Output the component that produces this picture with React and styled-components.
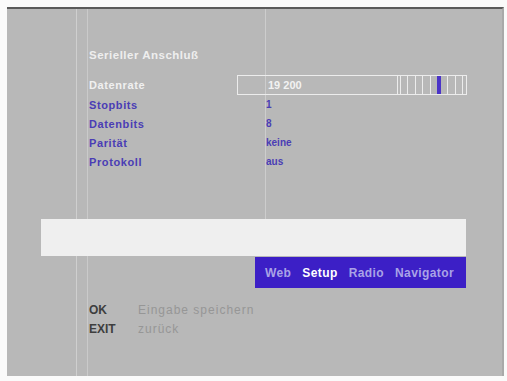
import React from 'react'
import styled, { createGlobalStyle } from 'styled-components'

const GlobalStyle = createGlobalStyle`
  body {
    margin: 0;
    background: #fafafa;
    font-family: "Liberation Sans", Arial, sans-serif;
  }
`

const settings = [
  { label: 'Stopbits', value: '1' },
  { label: 'Datenbits', value: '8' },
  { label: 'Parität', value: 'keine' },
  { label: 'Protokoll', value: 'aus' },
]

const ticks = [0, 1, 2, 3, 4, 5, 6, 7, 8]
const activeTick = 5

const navItems = [
  { label: 'Web' },
  { label: 'Setup', active: true },
  { label: 'Radio' },
  { label: 'Navigator' },
]

const keys = [
  { key: 'OK', text: 'Eingabe speichern' },
  { key: 'EXIT', text: 'zurück' },
]

const App = () => (
  <>
    <GlobalStyle />
    <Screen>
      <Content>
        <Title>Serieller Anschluß</Title>
        <Form>
          <Label $light>Datenrate</Label>
          <RateBox>
            <RateValue>19 200</RateValue>
            <Ticks>
              {ticks.map(i => <Tick key={i} $active={i === activeTick} />)}
            </Ticks>
          </RateBox>
          {settings.map(row => (
            <React.Fragment key={row.label}>
              <Label>{row.label}</Label>
              <Value>{row.value}</Value>
            </React.Fragment>
          ))}
        </Form>
      </Content>
      <InfoBar />
      <NavBar>
        {navItems.map(item => (
          <NavItem key={item.label} $active={item.active}>{item.label}</NavItem>
        ))}
      </NavBar>
      <Keys>
        {keys.map(k => (
          <React.Fragment key={k.key}>
            <KeyName>{k.key}</KeyName>
            <KeyText>{k.text}</KeyText>
          </React.Fragment>
        ))}
      </Keys>
    </Screen>
  </>
)

const Screen = styled.div`
  margin: 7px 3px 0 7px;
  width: 497px;
  height: 369px;
  box-sizing: border-box;
  border-top: 2px solid #5a5a5a;
  border-right: 2px solid #a9a9a9;
  background-color: #b8b8b8;
  background-image:
    linear-gradient(#cfcfcf, #cfcfcf),
    linear-gradient(#cacaca, #cacaca),
    linear-gradient(#cdcdcd, #cdcdcd);
  background-size: 1px 100%, 1px 100%, 1px 210px;
  background-position: 69px 0, 80px 0, 258px 0;
  background-repeat: no-repeat;
  padding-top: 39px;
  display: flex;
  flex-direction: column;
`

const Content = styled.div`
  padding-left: 82px;
`

const Title = styled.div`
  height: 14px;
  line-height: 14px;
  font-size: 11.5px;
  font-weight: bold;
  color: #eeeeee;
  letter-spacing: 0.5px;
  margin-bottom: 13px;
`

const Form = styled.div`
  display: grid;
  grid-template-columns: 148px 230px;
  grid-auto-rows: 19px;
  grid-template-rows: 20px;
  align-items: center;
`

const Label = styled.div`
  font-size: 11px;
  font-weight: bold;
  letter-spacing: 0.6px;
  color: ${({ $light }) => ($light ? '#f0f0f0' : '#4a3db5')};
`

const Value = styled.div`
  padding-left: 29px;
  font-size: 10px;
  font-weight: bold;
  color: #4a3db5;
`

const RateBox = styled.div`
  height: 20px;
  box-sizing: border-box;
  border: 1px solid #ececec;
  display: flex;
  align-items: stretch;
`

const RateValue = styled.div`
  flex: 1;
  padding-left: 30px;
  display: flex;
  align-items: center;
  font-size: 11px;
  font-weight: bold;
  color: #f2f2f2;
  border-right: 1px solid #ececec;
`

const Ticks = styled.div`
  width: 68px;
  display: flex;
  justify-content: space-between;
  padding: 0 3px 0 2px;
  box-sizing: border-box;
`

const Tick = styled.span`
  width: ${({ $active }) => ($active ? '4px' : '1px')};
  background: ${({ $active }) => ($active ? '#4a33c8' : '#ececec')};
`

const InfoBar = styled.div`
  margin: 48px 0 0 34px;
  width: 425px;
  height: 37px;
  background: #efefef;
`

const NavBar = styled.div`
  margin: 1px 0 0 248px;
  width: 211px;
  height: 31px;
  box-sizing: border-box;
  background: #3c1fc6;
  display: flex;
  align-items: center;
  gap: 11px;
  padding-left: 10px;
`

const NavItem = styled.span`
  font-size: 12px;
  font-weight: bold;
  letter-spacing: 0.4px;
  color: ${({ $active }) => ($active ? '#ffffff' : '#aaa3e6')};
`

const Keys = styled.div`
  margin: 12px 0 0 82px;
  display: grid;
  grid-template-columns: 49px auto;
  grid-auto-rows: 19px;
  align-items: center;
`

const KeyName = styled.span`
  font-size: 12px;
  font-weight: bold;
  color: #3e3e3e;
`

const KeyText = styled.span`
  font-size: 12px;
  color: #969696;
  letter-spacing: 1px;
`

export default App
